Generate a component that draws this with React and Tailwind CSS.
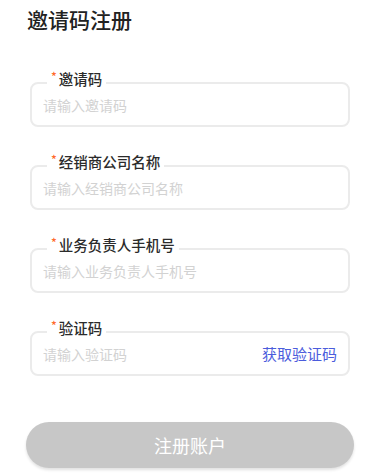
// Invite-code registration form: outlined fields with the label sitting in the border.

const fields = [
  { label: '邀请码', placeholder: '请输入邀请码' },
  { label: '经销商公司名称', placeholder: '请输入经销商公司名称' },
  { label: '业务负责人手机号', placeholder: '请输入业务负责人手机号' },
  { label: '验证码', placeholder: '请输入验证码', code: true },
];

function Field({ label, placeholder, code }) {
  return (
    <fieldset className="m-0 w-[320px] rounded-lg border-2 border-[#ebebeb] px-[11px] pb-[10px] pt-0">
      <legend className="ml-1 flex items-center px-1 pb-2 text-[14.5px] leading-5 font-medium text-[#2b2b2b]">
        <span className="mr-[2px] self-start text-[12px] leading-[14px] text-[#ff6a2b]">*</span>
        {label}
      </legend>
      <div className="-mt-[2px] flex h-5 items-center">
        <input
          type="text"
          placeholder={placeholder}
          className="h-5 min-w-0 flex-1 bg-transparent text-[14px] leading-5 text-[#333] outline-none placeholder:text-[#d2d2d2]"
        />
        {code && (
          <button type="button" className="shrink-0 text-[15px] leading-5 text-[#4b5cdc]">
            获取验证码
          </button>
        )}
      </div>
    </fieldset>
  );
}

export default function App() {
  return (
    <div
      className="h-[475px] w-[385px] overflow-hidden bg-white"
      style={{ fontFamily: '"Noto Sans CJK SC", "Noto Sans", sans-serif' }}
    >
      <h1 className="pl-[27px] pt-1 text-[21px] leading-[30px] font-medium text-[#222]">邀请码注册</h1>
      <form className="ml-[30px] mt-[35px] flex flex-col gap-[25px]">
        {fields.map((f) => (
          <Field key={f.label} {...f} />
        ))}
      </form>
      <button
        type="button"
        className="ml-[26px] mt-[46px] h-[46px] w-[328px] rounded-full bg-[#c7c7c7] text-[18px] text-white shadow-[0_2px_3px_rgba(0,0,0,0.12)]"
      >
        注册账户
      </button>
    </div>
  );
}
